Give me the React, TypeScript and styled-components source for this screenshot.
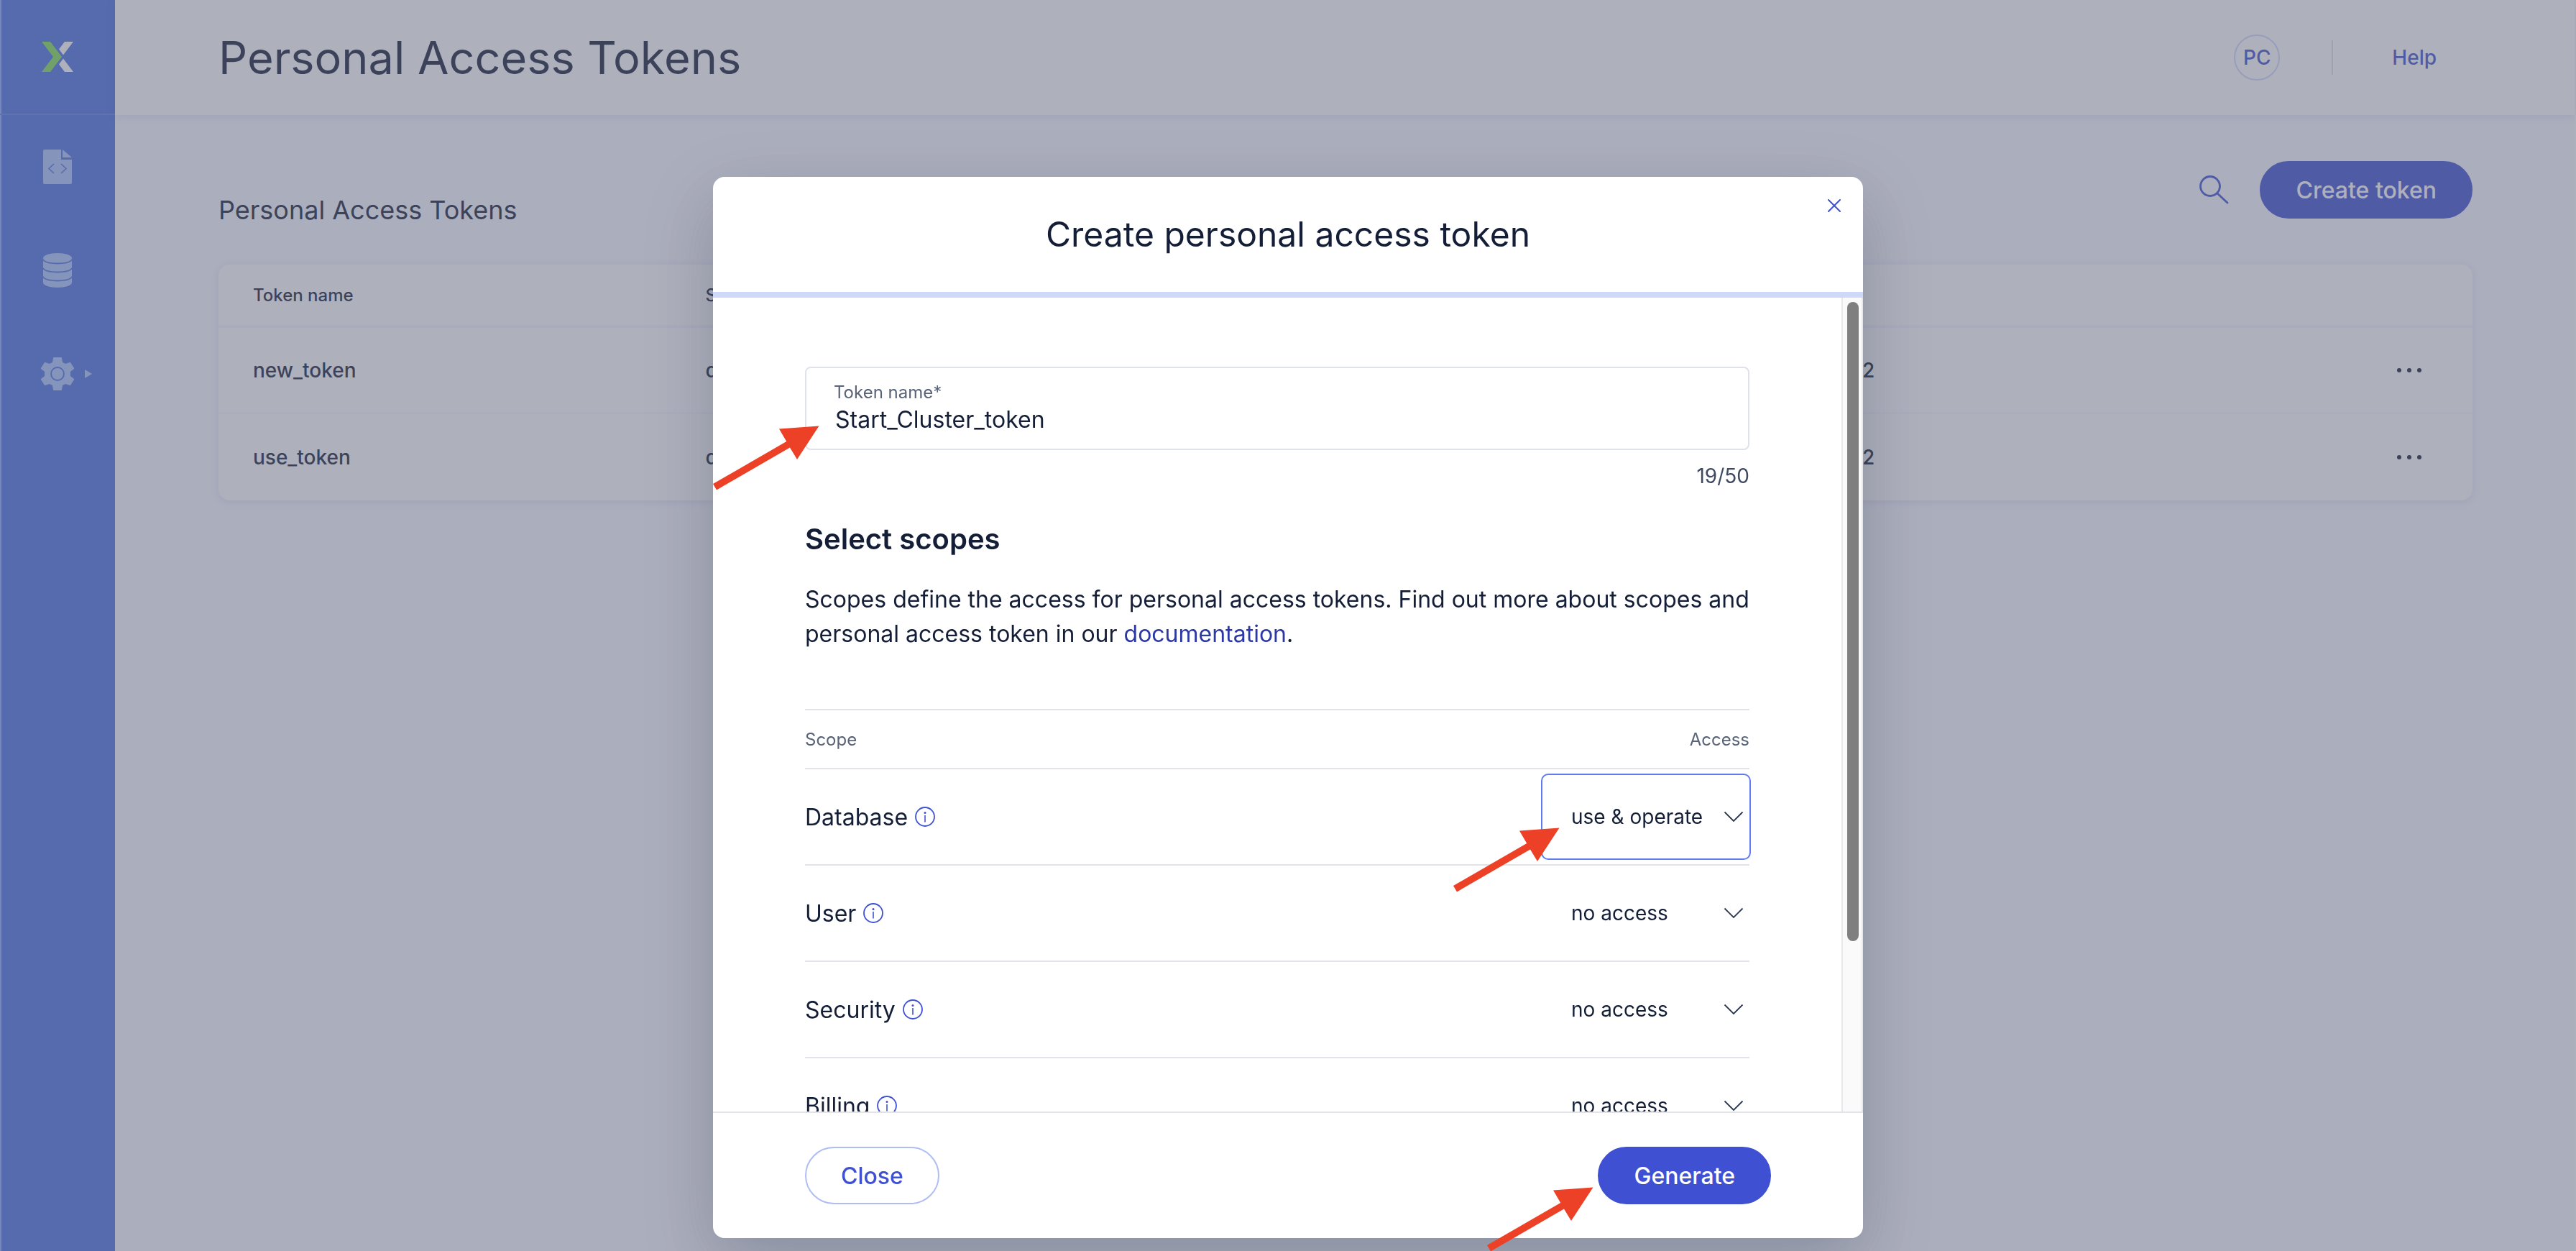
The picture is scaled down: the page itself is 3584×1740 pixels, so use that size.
import React, { useLayoutEffect, useRef, useState } from "react";
import styled, { createGlobalStyle } from "styled-components";

const ink = "#141e37";
const blue = "#3f51d2";
const navBlue = "#4971e2";
const navFill = "#aac5fd";
const rule = "#e2e3e9";

const GlobalStyle = createGlobalStyle`
  *, *::before, *::after { box-sizing: border-box; }
  html, body { margin: 0; height: 100%; overflow: hidden; }
  #root { height: 100%; }
  body {
    background: #f8faff;
    color: ${ink};
    font-family: Inter, "Liberation Sans", sans-serif;
    font-size: 28px;
  }
  button, input, select { font: inherit; color: inherit; }
  h1, h2, h3, p { margin: 0; font-weight: 400; }
`;

const Shell = styled.div`
  display: flex;
  min-height: 100vh;
`;

const Sidebar = styled.nav`
  flex: none;
  width: 160px;
  background: ${navBlue};
  box-shadow: inset 2px 0 0 #8faaff;
  display: flex;
  flex-direction: column;
`;

const LogoLink = styled.a`
  height: 160px;
  display: flex;
  align-items: center;
  justify-content: center;
  border-bottom: 2px solid #6281e6;
`;

const NavList = styled.div`
  display: flex;
  flex-direction: column;
  padding-top: 24px;
`;

const NavItem = styled.a`
  height: 96px;
  margin-bottom: 48px;
  display: flex;
  align-items: center;
  justify-content: center;
  position: relative;
`;

const NavCaret = styled.svg`
  position: absolute;
  right: 32px;
  top: 42px;
`;

const Main = styled.div`
  flex: 1;
  min-width: 0;
  border-right: 2px solid #fff;
`;

const TopBar = styled.header`
  height: 160px;
  padding: 0 192px 0 144px;
  background: #fff;
  box-shadow: 0 2px 12px rgba(40, 60, 140, 0.12);
  display: flex;
  align-items: center;
`;

const PageTitle = styled.h1`
  flex: 1;
  font-size: 63px;
  line-height: 80px;
`;

const Avatar = styled.button`
  width: 64px;
  height: 64px;
  padding: 0;
  border: 2px solid #d0d8fa;
  border-radius: 50%;
  background: none;
  color: ${blue};
  font-weight: 500;
`;

const Divider = styled.span`
  width: 2px;
  height: 48px;
  margin: 0 82px 0 72px;
  background: #e2e3ea;
`;

const HelpLink = styled.a`
  color: ${blue};
  font-weight: 500;
  text-decoration: none;
`;

const Content = styled.main`
  padding: 64px 142px 64px 144px;
`;

const Toolbar = styled.div`
  display: flex;
  align-items: flex-start;
  margin-bottom: 54px;
`;

const SectionTitle = styled.h2`
  flex: 1;
  padding-top: 46px;
  font-size: 36px;
  line-height: 44px;
`;

const IconButton = styled.button<{ $size: number }>`
  border: 0;
  padding: 0;
  background: none;
  display: flex;
  align-items: center;
  justify-content: center;
  width: ${(p) => p.$size}px;
  height: ${(p) => p.$size}px;
`;

const Actions = styled.div`
  display: flex;
  align-items: center;
  gap: 24px;
`;

const PillButton = styled.button<{ $outline?: boolean }>`
  height: 80px;
  padding: 0 48px;
  border: 2px solid ${(p) => (p.$outline ? "#afbdf5" : blue)};
  border-radius: 40px;
  background: ${(p) => (p.$outline ? "#fff" : blue)};
  color: ${(p) => (p.$outline ? blue : "#fff")};
  font-size: 32px;
  font-weight: 500;
  white-space: nowrap;
`;

const TokenCard = styled.div`
  background: #fff;
  border-radius: 16px;
  box-shadow: 0 2px 12px rgba(40, 60, 140, 0.12);
`;

const TokenTable = styled.table`
  width: 100%;
  table-layout: fixed;
  border-collapse: separate;
  border-spacing: 0;
  text-align: left;

  th, td { padding: 0 48px; }
  th:not(:first-child), td:not(:first-child) { padding-left: 0; }
  th { height: 88px; font-size: 24px; font-weight: 500; border-bottom: 4px solid #f4f6ff; }
  td { height: 120px; font-size: 28px; font-weight: 500; }
  tbody tr:not(:last-child) td { border-bottom: 3px solid #f7f9ff; }
`;

const Col = styled.col<{ $share?: string }>`
  width: ${(p) => p.$share ?? "auto"};
`;

const MoreCell = styled.td`
  text-align: right;
  button { margin: 0 16px 0 auto; }
`;

const Backdrop = styled.div`
  position: fixed;
  inset: 0;
  overflow: hidden;
  background: rgba(98, 102, 125, 0.515);
  display: flex;
  justify-content: center;
  align-items: flex-start;
  padding: 246px 0 18px;
`;

const Dialog = styled.section`
  width: 1600px;
  max-width: 100%;
  height: 100%;
  background: #fff;
  border-radius: 16px;
  box-shadow: 0 32px 96px rgba(20, 30, 55, 0.22);
  display: flex;
  flex-direction: column;
`;

const DialogHeader = styled.header`
  flex: none;
  height: 168px;
  border-bottom: 8px solid #d0d8fa;
  display: flex;
  align-items: center;
  justify-content: center;
  position: relative;
`;

const DialogTitle = styled.h2`
  font-size: 48px;
  line-height: 64px;
`;

const CloseCorner = styled.div`
  position: absolute;
  top: 20px;
  right: 20px;
`;

const BodyFrame = styled.div`
  flex: 1;
  min-height: 0;
  display: flex;
`;

const Scroller = styled.div`
  flex: 1;
  min-width: 0;
  overflow-y: auto;
  scrollbar-width: none;
  padding: 96px 128px 230px;
`;

const Track = styled.div`
  flex: none;
  width: 30px;
  padding: 0 4px 0 6px;
  background: #fafafa;
  border: solid #e8e8e8;
  border-width: 0 2px;
`;

const Thumb = styled.div`
  padding: 6px 0;
  &::before {
    content: "";
    display: block;
    height: 100%;
    border-radius: 8px;
    background: #7f7f7f;
  }
`;

const Anchor = styled.div`
  position: relative;
`;

const Field = styled.div`
  height: 116px;
  padding: 18px 38px 0;
  border: 2px solid #dfe3e9;
  border-radius: 8px;
  display: flex;
  flex-direction: column;
`;

const FieldLabel = styled.label`
  font-size: 24px;
  line-height: 32px;
  color: #5a6479;
`;

const FieldInput = styled.input`
  border: 0;
  padding: 0 2px;
  outline: 0;
  background: none;
  font-size: 32px;
  line-height: 44px;
  height: 44px;
`;

const Counter = styled.p`
  margin: 16px 0 32px;
  text-align: right;
  line-height: 40px;
  color: #3f4a60;
`;

const ScopesTitle = styled.h3`
  font-size: 40px;
  line-height: 72px;
  font-weight: 600;
`;

const Lead = styled.p`
  margin: 24px 0 80px;
  font-size: 32px;
  line-height: 48px;
  a { color: #2c39a5; text-decoration: none; }
`;

const ScopeTable = styled.table`
  width: 100%;
  border-collapse: separate;
  border-spacing: 0;
  border-top: 2px solid ${rule};
  text-align: left;

  th, td { padding: 0; border-bottom: 2px solid ${rule}; }
  thead th { height: 82px; font-size: 24px; font-weight: 400; color: #5a6479; }
  thead th:last-child { text-align: right; }
  tbody th { height: 134px; font-size: 32px; font-weight: 400; }
`;

const ScopeName = styled.div`
  display: flex;
  align-items: center;
  gap: 10px;
`;

const AccessCell = styled.td`
  width: 290px;
`;

const SelectBox = styled.div<{ $active?: boolean }>`
  position: relative;
  width: 292px;
  height: 120px;
  margin-right: -2px;
  border: 2px solid ${(p) => (p.$active ? "#5f7bef" : "transparent")};
  border-radius: 10px;
  display: flex;
  align-items: center;
`;

const AccessSelect = styled.select`
  appearance: none;
  width: 100%;
  height: 100%;
  padding: 0 56px 0 40px;
  border: 0;
  outline: 0;
  background: none;
  font-size: 28px;
`;

const Chevron = styled.svg`
  position: absolute;
  right: 8px;
  pointer-events: none;
`;

const Footer = styled.footer`
  flex: none;
  height: 176px;
  padding: 0 128px;
  border-top: 2px solid ${rule};
  display: flex;
  align-items: center;
  justify-content: space-between;
`;

const Pointer = styled.svg<{ $x: number; $y: number }>`
  position: absolute;
  z-index: 1;
  left: ${(p) => p.$x}px;
  top: ${(p) => p.$y}px;
  pointer-events: none;
`;

function Arrow({ x, y }: { x: number; y: number }) {
  return (
    <Pointer $x={x} $y={y} width="148" height="90" viewBox="0 0 148 90" aria-hidden="true">
      <path d="M147.5 0.5 92 4.5 102.2 22 0 81l5 8.5L107 30.5 117 47z" fill="#ec4126" />
    </Pointer>
  );
}

function InfoIcon() {
  return (
    <svg width="28" height="28" viewBox="0 0 28 28" aria-hidden="true">
      <circle cx="14" cy="14" r="13" fill="none" stroke={blue} strokeWidth="1.8" />
      <circle cx="14" cy="8.5" r="1.5" fill={blue} />
      <path d="M14 12v9.5" stroke={blue} strokeWidth="1.6" />
    </svg>
  );
}

function MoreIcon() {
  return (
    <svg width="36" height="8" viewBox="0 0 36 8" fill={ink} aria-hidden="true">
      <circle cx="4" cy="4" r="3" />
      <circle cx="18" cy="4" r="3" />
      <circle cx="32" cy="4" r="3" />
    </svg>
  );
}

const tokens = [
  { name: "new_token", scope: "database", expires: "Dec 31, 2022" },
  { name: "use_token", scope: "database", expires: "Dec 31, 2022" },
];

const scopes = [
  { name: "Database", access: "use & operate", active: true },
  { name: "User", access: "no access" },
  { name: "Security", access: "no access" },
  { name: "Billing", access: "no access" },
];

function ScopeRow({ name, access, active }: { name: string; access: string; active?: boolean }) {
  const id = `scope-${name.toLowerCase()}`;
  return (
    <tr>
      <th scope="row">
        <ScopeName>
          <label htmlFor={id}>{name}</label>
          <InfoIcon />
        </ScopeName>
      </th>
      <AccessCell>
        <SelectBox $active={active}>
          <AccessSelect id={id} defaultValue={access}>
            <option>{access}</option>
          </AccessSelect>
          <Chevron width="28" height="16" viewBox="0 0 28 16" aria-hidden="true">
            <path d="M1.5 1.5 14 14 26.5 1.5" fill="none" stroke="#2d3850" strokeWidth="1.8" />
          </Chevron>
          {active && <Arrow x={-124} y={73} />}
        </SelectBox>
      </AccessCell>
    </tr>
  );
}

function CreateTokenDialog() {
  const scroller = useRef<HTMLDivElement>(null);
  const [thumb, setThumb] = useState({ size: 100, top: 0 });
  const [name, setName] = useState("Start_Cluster_token");

  const measure = () => {
    const el = scroller.current;
    if (!el) return;
    setThumb({
      size: (el.clientHeight / el.scrollHeight) * 100,
      top: (el.scrollTop / el.scrollHeight) * el.clientHeight,
    });
  };

  useLayoutEffect(() => {
    measure();
    window.addEventListener("resize", measure);
    return () => window.removeEventListener("resize", measure);
  }, []);

  return (
    <Dialog role="dialog" aria-labelledby="dialog-title">
      <DialogHeader>
        <DialogTitle id="dialog-title">Create personal access token</DialogTitle>
        <CloseCorner>
          <IconButton $size={40} aria-label="Close dialog">
            <svg width="20" height="20" viewBox="0 0 20 20" aria-hidden="true">
              <path d="M2 2l16 16M18 2 2 18" stroke={blue} strokeWidth="2" strokeLinecap="round" />
            </svg>
          </IconButton>
        </CloseCorner>
      </DialogHeader>
      <BodyFrame>
        <Scroller ref={scroller} onScroll={measure}>
          <Anchor>
            <Field>
              <FieldLabel htmlFor="token-name">Token name*</FieldLabel>
              <FieldInput id="token-name" maxLength={50} value={name} onChange={(e) => setName(e.target.value)} />
            </Field>
            <Arrow x={-128} y={82} />
          </Anchor>
          <Counter>{name.length}/50</Counter>
          <ScopesTitle>Select scopes</ScopesTitle>
          <Lead>
            Scopes define the access for personal access tokens. Find out more about scopes and personal access token
            in our <a href="#documentation">documentation</a>.
          </Lead>
          <ScopeTable>
            <thead>
              <tr>
                <th scope="col">Scope</th>
                <th scope="col">Access</th>
              </tr>
            </thead>
            <tbody>
              {scopes.map((s) => (
                <ScopeRow key={s.name} {...s} />
              ))}
            </tbody>
          </ScopeTable>
        </Scroller>
        <Track>
          <Thumb style={{ height: `${thumb.size}%`, marginTop: thumb.top }} />
        </Track>
      </BodyFrame>
      <Footer>
        <PillButton $outline>Close</PillButton>
        <Anchor>
          <PillButton>Generate</PillButton>
          <Arrow x={-154} y={56} />
        </Anchor>
      </Footer>
    </Dialog>
  );
}

export default function App() {
  return (
    <>
      <GlobalStyle />
      <Shell>
        <Sidebar>
          <LogoLink href="#home" aria-label="Home">
            <svg width="46" height="44" viewBox="0 0 46 44" aria-hidden="true">
              <path d="M1 1h12l16 21-16 21H1l16-21z" fill="#83e052" />
              <path d="M45 1H33l-8 10.500 6 8zM45 43H33l-8-10.500 6-8z" fill="#fff" />
            </svg>
          </LogoLink>
          <NavList>
            <NavItem href="#worksheets" aria-label="Worksheets">
              <svg width="40" height="48" viewBox="0 0 40 48" aria-hidden="true">
                <path d="M2 0h23v14h15v32a2 2 0 0 1-2 2H2a2 2 0 0 1-2-2V2a2 2 0 0 1 2-2z" fill={navFill} />
                <path d="M27 0v11h13z" fill={navFill} />
                <path d="M15 20l-7 6.500 7 6.500M25 20l7 6.500-7 6.500" fill="none" stroke={navBlue} strokeWidth="1.6" />
              </svg>
            </NavItem>
            <NavItem href="#databases" aria-label="Databases">
              <svg width="40" height="48" viewBox="0 0 40 48" aria-hidden="true">
                <path d="M0 7C0 3 9 0 20 0s20 3 20 7v34c0 4-9 7-20 7S0 45 0 41z" fill={navFill} />
                <path
                  d="M-1 8c2 4 10 6.500 21 6.500S39 12 41 8M-1 20c2 4 10 6.500 21 6.500s19-2.500 21-6.500M-1 32c2 4 10 6.500 21 6.500s19-2.500 21-6.500"
                  fill="none"
                  stroke={navBlue}
                  strokeWidth="1.8"
                />
              </svg>
            </NavItem>
            <NavItem href="#settings" aria-label="Settings">
              <svg width="46" height="46" viewBox="0 0 46 46" aria-hidden="true">
                <path
                  d="M18 0h10a1 1 0 0 1 1 1l1 6 4 2 6-2a1 1 0 0 1 1 0l5 8v1l-5 4v6l5 4v1l-5 8a1 1 0 0 1-1 0l-6-2-4 2-1 6a1 1 0 0 1-1 1H18a1 1 0 0 1-1-1l-1-6-4-2-6 2a1 1 0 0 1-1 0l-5-8v-1l5-4v-6l-5-4v-1l5-8a1 1 0 0 1 1 0l6 2 4-2 1-6a1 1 0 0 1 1-1z"
                  fill={navFill}
                />
                <circle cx="23" cy="23" r="9" fill="none" stroke={navBlue} strokeWidth="1.8" />
              </svg>
              <NavCaret width="10" height="12" viewBox="0 0 10 12" aria-hidden="true">
                <path d="M0 0l10 6-10 6z" fill={navFill} />
              </NavCaret>
            </NavItem>
          </NavList>
        </Sidebar>
        <Main>
          <TopBar>
            <PageTitle>Personal Access Tokens</PageTitle>
            <Avatar>PC</Avatar>
            <Divider />
            <HelpLink href="#help">Help</HelpLink>
          </TopBar>
          <Content>
            <Toolbar>
              <SectionTitle>Personal Access Tokens</SectionTitle>
              <Actions>
                <IconButton $size={80} aria-label="Search tokens">
                  <svg width="42" height="42" viewBox="0 0 42 42" aria-hidden="true">
                    <circle cx="16" cy="16" r="13.5" fill="none" stroke={blue} strokeWidth="2.8" />
                    <path d="M26 26l14 13" stroke={blue} strokeWidth="2.8" strokeLinecap="round" />
                  </svg>
                </IconButton>
                <PillButton>Create token</PillButton>
              </Actions>
            </Toolbar>
            <TokenCard>
              <TokenTable>
                <colgroup>
                  <Col $share="21.6%" />
                  <Col $share="46.3%" />
                  <Col />
                  <Col $share="10%" />
                </colgroup>
                <thead>
                  <tr>
                    <th scope="col">Token name</th>
                    <th scope="col">Scopes</th>
                    <th scope="col" />
                    <th scope="col" />
                  </tr>
                </thead>
                <tbody>
                  {tokens.map((t) => (
                    <tr key={t.name}>
                      <td>{t.name}</td>
                      <td>{t.scope}</td>
                      <td>{t.expires}</td>
                      <MoreCell>
                        <IconButton $size={48} aria-label={`More actions for ${t.name}`}>
                          <MoreIcon />
                        </IconButton>
                      </MoreCell>
                    </tr>
                  ))}
                </tbody>
              </TokenTable>
            </TokenCard>
          </Content>
        </Main>
      </Shell>
      <Backdrop>
        <CreateTokenDialog />
      </Backdrop>
    </>
  );
}
